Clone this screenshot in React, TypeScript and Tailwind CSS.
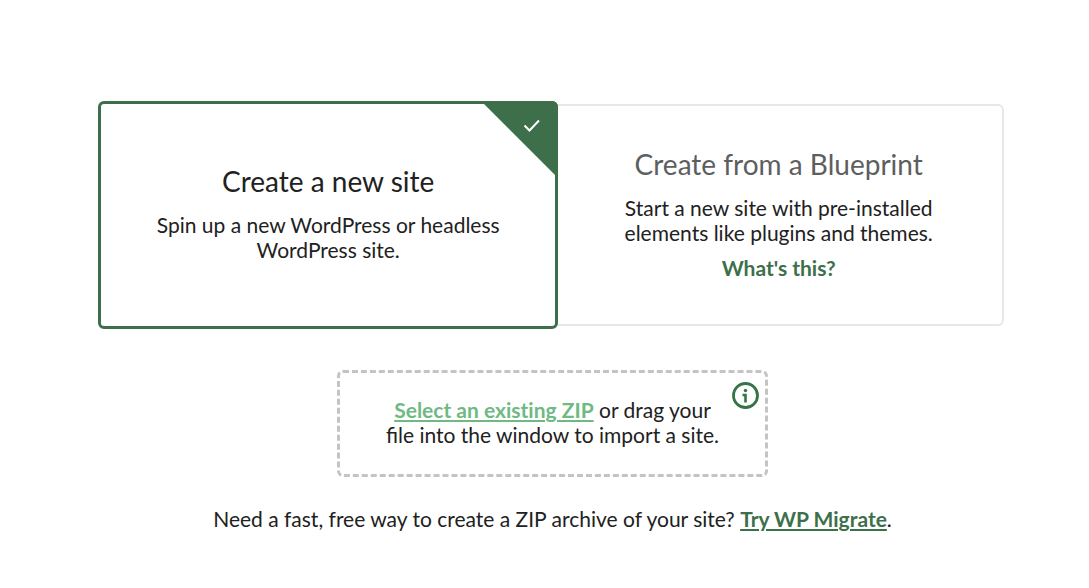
import { useState } from "react";

function CheckCorner() {
  return (
    <svg
      className="absolute -top-[3px] -right-[3px] h-[76px] w-[76px] rounded-tr-md"
      viewBox="0 0 76 76"
      aria-hidden="true"
    >
      <path d="M0 1 V0 H76 V76 H75 Z" fill="#3d6f4b" />
      <path d="M42.5 24.5 L47.5 29.5 L57 19.5" fill="none" stroke="#fff" strokeWidth="2" />
    </svg>
  );
}

function InfoIcon() {
  return (
    <svg className="h-[27px] w-[27px]" viewBox="0 0 27 27" aria-hidden="true">
      <circle cx="13.5" cy="13.5" r="12" fill="none" stroke="#357444" strokeWidth="2.8" />
      <circle cx="13.5" cy="8.5" r="1.7" fill="#357444" />
      <path d="M10.5 13 H13.5 V20.5" fill="none" stroke="#357444" strokeWidth="2.6" />
    </svg>
  );
}

const cardBase =
  "relative flex cursor-pointer flex-col items-center justify-center bg-white px-12 pb-1 text-center";
const selectedCard = "z-10 min-h-[228px] rounded-md border-3 border-[#3d6f4b]";
const plainCard = "min-h-[222px] rounded-md border-2 border-[#e7e7e7]";

export default function App() {
  const [choice, setChoice] = useState("new");
  const isNew = choice === "new";

  return (
    <main className="bg-white pt-[101px] pr-[85px] pb-10 pl-[98px] font-['Lato',sans-serif] text-[21px] leading-[25px] text-[#212121]">
      <fieldset className="flex items-center" aria-label="Site type">
        <label className={`${cardBase} -mr-[5px] flex-[461] ${isNew ? selectedCard : plainCard}`}>
          <input
            type="radio"
            name="site-type"
            className="absolute inset-0 cursor-pointer appearance-none"
            checked={isNew}
            onChange={() => setChoice("new")}
          />
          {isNew && <CheckCorner />}
          <span className="mb-3.5 text-[28px] leading-[34px]">Create a new site</span>
          <span>
            Spin up a new WordPress or headless
            <br />
            WordPress site.
          </span>
        </label>
        <label className={`${cardBase} flex-[451] ${isNew ? plainCard : selectedCard}`}>
          <input
            type="radio"
            name="site-type"
            className="absolute inset-0 cursor-pointer appearance-none"
            checked={!isNew}
            onChange={() => setChoice("blueprint")}
          />
          {!isNew && <CheckCorner />}
          <span className="mb-3.5 text-[28px] leading-[34px] text-[#5d5e5e]">Create from a Blueprint</span>
          <span>
            Start a new site with pre-installed
            <br />
            elements like plugins and themes.
          </span>
          <a href="#blueprints" className="relative mt-2.5 font-bold text-[#3d6f4b]">
            What's this?
          </a>
        </label>
      </fieldset>

      <section className="pt-[41px] pl-[3px] text-center">
        <div className="relative mx-auto w-[431px] max-w-full rounded-md border-3 border-dashed border-[#c4c4c4] pt-6 pb-[27px]">
          <button
            type="button"
            className="cursor-pointer font-bold text-[#6fb984] underline decoration-2 underline-offset-2 [font-variant-ligatures:none]"
          >
            Select an existing ZIP
          </button>{" "}
          or drag your
          <br />
          file into the window to import a site.
          <button type="button" aria-label="Import information" className="absolute top-[9px] right-[6px] cursor-pointer">
            <InfoIcon />
          </button>
        </div>

        <p className="mt-[29px]">
          Need a fast, free way to create a ZIP archive of your site?{" "}
          <a href="#migrate" className="font-bold text-[#3d6f4b] underline decoration-2 underline-offset-2">
            Try WP Migrate
          </a>
          .
        </p>
      </section>
    </main>
  );
}
